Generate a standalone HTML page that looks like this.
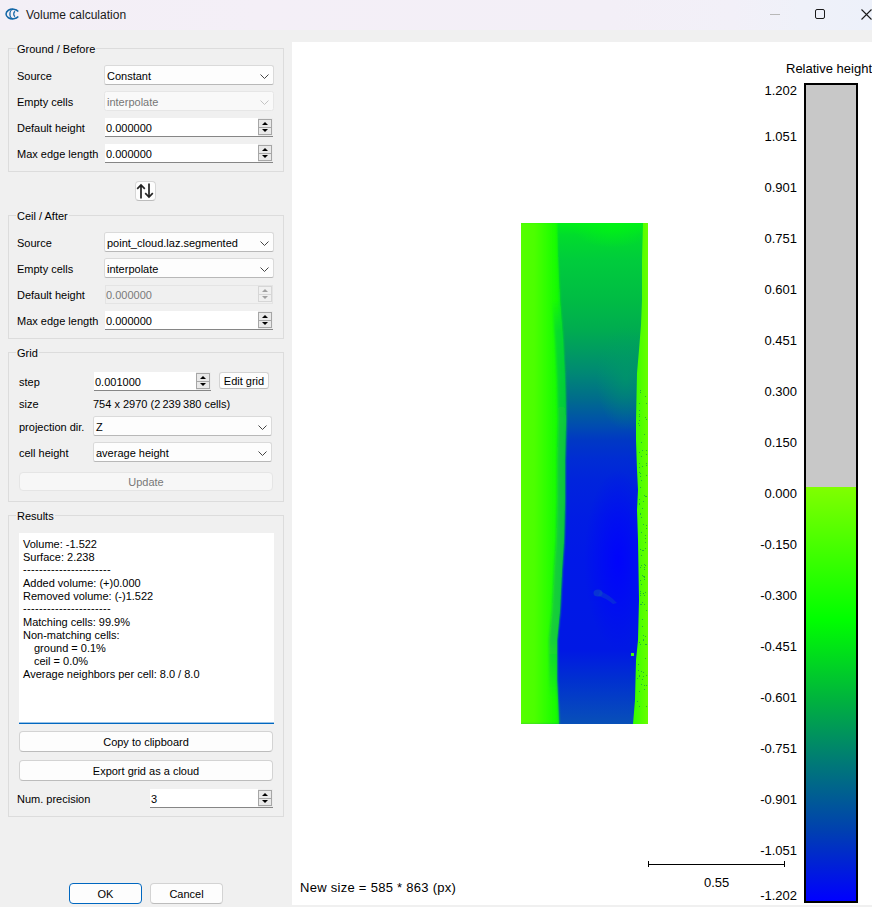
<!DOCTYPE html>
<html><head><meta charset="utf-8"><style>
*{margin:0;padding:0;box-sizing:border-box}
html,body{width:872px;height:907px;overflow:hidden;background:#f0f0f0;font-family:"Liberation Sans",sans-serif;color:#000}
.a{position:absolute}
.t{position:absolute;font-size:11px;line-height:13px;white-space:nowrap}
.gb{position:absolute;left:8px;width:276px;border:1px solid #dcdcdc}
.gt{position:absolute;left:16px;font-size:11px;line-height:13px;background:#f0f0f0;padding:0 1px;white-space:nowrap}
.cb{position:absolute;left:104px;width:170px;height:20px;background:#fdfdfd;border:1px solid #dadada;border-bottom-color:#b8b8b8;border-radius:2.5px}
.cb.dis{background:#f9f9f9;border-color:#e6e6e6;color:#767676}
.cb span{position:absolute;left:2px;top:4px;font-size:11px;line-height:13px;white-space:nowrap}
.cb svg{position:absolute;right:4px;top:8px}
.sb{position:absolute;height:19px;background:#ececec}
.sb .fld{position:absolute;left:0;top:0;height:18px;background:#fff}
.sb .ul{position:absolute;left:0;right:0;bottom:0;height:1px;background:#868686}
.sb .btn{position:absolute;width:14px;height:16px;top:1px}
.sb span{position:absolute;left:1px;top:4px;font-size:11px;line-height:13px;white-space:nowrap}
.sb.dis{background:#f0f0f0;outline:1px solid #e4e4e4;outline-offset:-1px}
.sb.dis .fld{background:transparent}
.sb.dis .ul{background:transparent}
.sb.dis span{color:#7a7a7a}
.pb{position:absolute;background:#fdfdfd;border:1px solid #d3d3d3;border-bottom-color:#bcbcbc;border-radius:4px;text-align:center;font-size:11px;line-height:19px;white-space:nowrap}
.vp{position:absolute;font-size:13px;line-height:15px;white-space:nowrap;color:#000}
.vp2{letter-spacing:0.28px}
</style></head><body>
<div class="a" style="left:0;top:0;width:872px;height:30px;background:linear-gradient(90deg,#f3eff6 0%,#f4eff7 30%,#f3eff7 70%,#f2f0f8 84%,#eff1f9 92%,#edf1fa 100%)"></div>
<div class="a" style="left:26px;top:6px;font-size:12px;line-height:18px;color:#1a1a1a;white-space:nowrap">Volume calculation</div>
<svg class="a" style="left:0;top:0" width="24" height="26" viewBox="0 0 24 26"><path d="M18.3 11.5 A6.6 4.9 0 1 0 18.3 16.5" fill="none" stroke="#1266a6" stroke-width="1.5"/><path d="M13 9.4 A3.1 4.6 0 0 0 13 18.6" fill="none" stroke="#1266a6" stroke-width="1.3"/><path d="M15 11.4 A2.3 2.9 0 0 0 15 16.6" fill="none" stroke="#1266a6" stroke-width="1.3"/></svg>
<div class="a" style="left:770px;top:14px;width:10px;height:1px;background:#b8b8b8"></div>
<div class="a" style="left:815px;top:9px;width:10px;height:10px;border:1px solid #1a1a1a;border-radius:2px"></div>
<svg class="a" style="left:861px;top:9px" width="11" height="11" viewBox="0 0 11 11"><path d="M0.5 0.5 L10.5 10.5 M10.5 0.5 L0.5 10.5" stroke="#1a1a1a" stroke-width="1.1"/></svg>
<div class="a" style="left:292px;top:42px;width:580px;height:863px;background:#fff"></div>
<svg class="a" style="left:0;top:0" width="872" height="907" viewBox="0 0 872 907"><defs><clipPath id="clp"><rect x="521" y="223" width="127" height="501"/></clipPath><linearGradient id="cg" gradientUnits="userSpaceOnUse" x1="0" y1="223" x2="0" y2="724"><stop offset="0.0000" stop-color="#00f018"/><stop offset="0.0240" stop-color="#00dc2c"/><stop offset="0.0739" stop-color="#00cc3c"/><stop offset="0.1537" stop-color="#00bc44"/><stop offset="0.2136" stop-color="#00ac50"/><stop offset="0.2535" stop-color="#009c60"/><stop offset="0.2994" stop-color="#008874"/><stop offset="0.3513" stop-color="#006c8c"/><stop offset="0.4052" stop-color="#004cb0"/><stop offset="0.4331" stop-color="#0038c4"/><stop offset="0.4731" stop-color="#002cd4"/><stop offset="0.5130" stop-color="#0024dc"/><stop offset="0.5928" stop-color="#001ce4"/><stop offset="0.6727" stop-color="#0018e8"/><stop offset="0.8523" stop-color="#0018e4"/><stop offset="0.9122" stop-color="#0030d0"/><stop offset="1.0000" stop-color="#0850b8"/></linearGradient><linearGradient id="lg" gradientUnits="userSpaceOnUse" x1="521" y1="0" x2="566" y2="0"><stop offset="0" stop-color="#54ff00"/><stop offset="0.3" stop-color="#4cff00"/><stop offset="0.55" stop-color="#30ff00"/><stop offset="0.78" stop-color="#16fc02"/><stop offset="1" stop-color="#00e41c"/></linearGradient><linearGradient id="rg" gradientUnits="userSpaceOnUse" x1="632" y1="0" x2="648" y2="0"><stop offset="0" stop-color="#30ff00"/><stop offset="1" stop-color="#68ff00"/></linearGradient><radialGradient id="gb"><stop offset="0" stop-color="#00f414" stop-opacity="0.8"/><stop offset="1" stop-color="#00f414" stop-opacity="0"/></radialGradient><radialGradient id="gb2"><stop offset="0" stop-color="#00a060" stop-opacity="0.5"/><stop offset="1" stop-color="#00a060" stop-opacity="0"/></radialGradient><radialGradient id="bb"><stop offset="0" stop-color="#0000ff" stop-opacity="0.85"/><stop offset="1" stop-color="#0000ff" stop-opacity="0"/></radialGradient><linearGradient id="stg" gradientUnits="userSpaceOnUse" x1="0" y1="300" x2="0" y2="700"><stop offset="0" stop-color="#00c848" stop-opacity="0"/><stop offset="0.08" stop-color="#00c848" stop-opacity="0.6"/><stop offset="0.35" stop-color="#10b058" stop-opacity="0.6"/><stop offset="0.85" stop-color="#10a868" stop-opacity="0.55"/><stop offset="1" stop-color="#10a868" stop-opacity="0"/></linearGradient><filter id="sb1" x="-20%" y="-20%" width="140%" height="140%"><feGaussianBlur stdDeviation="1.2"/></filter></defs><g clip-path="url(#clp)"><rect x="521" y="223" width="127" height="501" fill="url(#cg)"/><ellipse cx="618" cy="560" rx="34" ry="90" fill="url(#bb)"/><ellipse cx="612" cy="226" rx="40" ry="22" fill="url(#gb)"/><ellipse cx="626" cy="378" rx="30" ry="52" fill="url(#gb2)"/><ellipse cx="598" cy="593" rx="4.5" ry="3.5" fill="#1050c0" opacity="0.55"/><path d="M600 591 Q610 595 617 603 L613 604 Q606 598 598 596Z" fill="#1050c0" opacity="0.4"/><g filter="url(#sb1)"><polygon points="510,223 557,223 558,260 560,300 563,340 565,380 566,420 565,460 565,500 564,540 562,570 560,610 557,640 557,680 558,700 559,724 510,724" fill="url(#lg)"/></g><polygon points="521,223 557,223 558,260 560,300 563,340 565,380 566,420 565,460 565,500 564,540 562,570 560,610 557,640 557,680 558,700 559,724 521,724" fill="url(#lg)" opacity="0.6"/><g filter="url(#sb1)"><polygon points="560,300 563,340 565,380 566,420 565,460 565,500 564,540 562,570 560,610 557,640 557,680 558,700 550,700 549,680 549,640 552,610 554,570 556,540 557,500 557,460 558,420 557,380 555,340 552,300" fill="url(#stg)"/></g><polygon points="650,223 643,223 642,260 642,300 641,325 639,350 637,373 636,420 636,440 637,470 638,490 637,510 638,540 639,600 638,640 636,660 635,700 633,724 650,724" fill="url(#rg)"/><rect x="641" y="555" width="1" height="1" fill="#14a83c" opacity="0.8"/><rect x="645" y="592" width="1" height="1" fill="#14a83c" opacity="0.8"/><rect x="639" y="414" width="1" height="1" fill="#14a83c" opacity="0.8"/><rect x="638" y="664" width="1" height="1" fill="#14a83c" opacity="0.8"/><rect x="644" y="577" width="1" height="1" fill="#14a83c" opacity="0.8"/><rect x="646" y="419" width="1" height="1" fill="#14a83c" opacity="0.8"/><rect x="639" y="499" width="1" height="1" fill="#14a83c" opacity="0.8"/><rect x="644" y="434" width="1" height="1" fill="#14a83c" opacity="0.8"/><rect x="640" y="604" width="1" height="1" fill="#14a83c" opacity="0.8"/><rect x="640" y="513" width="1" height="1" fill="#14a83c" opacity="0.8"/><rect x="643" y="672" width="1" height="1" fill="#14a83c" opacity="0.8"/><rect x="639" y="420" width="1" height="1" fill="#14a83c" opacity="0.8"/><rect x="639" y="504" width="1" height="1" fill="#14a83c" opacity="0.8"/><rect x="646" y="685" width="1" height="1" fill="#14a83c" opacity="0.8"/><rect x="640" y="593" width="1" height="1" fill="#14a83c" opacity="0.8"/><rect x="639" y="503" width="1" height="1" fill="#14a83c" opacity="0.8"/><rect x="639" y="675" width="1" height="1" fill="#14a83c" opacity="0.8"/><rect x="645" y="538" width="1" height="1" fill="#14a83c" opacity="0.8"/><rect x="646" y="463" width="1" height="1" fill="#14a83c" opacity="0.8"/><rect x="642" y="450" width="1" height="1" fill="#14a83c" opacity="0.8"/><rect x="639" y="676" width="1" height="1" fill="#14a83c" opacity="0.8"/><rect x="641" y="442" width="1" height="1" fill="#14a83c" opacity="0.8"/><rect x="640" y="580" width="1" height="1" fill="#14a83c" opacity="0.8"/><rect x="638" y="670" width="1" height="1" fill="#14a83c" opacity="0.8"/><rect x="637" y="678" width="1" height="1" fill="#14a83c" opacity="0.8"/><rect x="639" y="706" width="1" height="1" fill="#14a83c" opacity="0.8"/><rect x="645" y="644" width="1" height="1" fill="#14a83c" opacity="0.8"/><rect x="643" y="550" width="1" height="1" fill="#14a83c" opacity="0.8"/><rect x="644" y="689" width="1" height="1" fill="#14a83c" opacity="0.8"/><rect x="642" y="575" width="1" height="1" fill="#14a83c" opacity="0.8"/><rect x="641" y="517" width="1" height="1" fill="#14a83c" opacity="0.8"/><rect x="640" y="514" width="1" height="1" fill="#14a83c" opacity="0.8"/><rect x="641" y="684" width="1" height="1" fill="#14a83c" opacity="0.8"/><rect x="645" y="658" width="1" height="1" fill="#14a83c" opacity="0.8"/><rect x="645" y="565" width="1" height="1" fill="#14a83c" opacity="0.8"/><rect x="642" y="619" width="1" height="1" fill="#14a83c" opacity="0.8"/><rect x="637" y="701" width="1" height="1" fill="#14a83c" opacity="0.8"/><rect x="646" y="450" width="1" height="1" fill="#14a83c" opacity="0.8"/><rect x="641" y="604" width="1" height="1" fill="#14a83c" opacity="0.8"/><rect x="641" y="565" width="1" height="1" fill="#14a83c" opacity="0.8"/><rect x="643" y="640" width="1" height="1" fill="#14a83c" opacity="0.8"/><rect x="639" y="410" width="1" height="1" fill="#14a83c" opacity="0.8"/><rect x="646" y="675" width="1" height="1" fill="#14a83c" opacity="0.8"/><rect x="642" y="550" width="1" height="1" fill="#14a83c" opacity="0.8"/><rect x="644" y="569" width="1" height="1" fill="#14a83c" opacity="0.8"/><rect x="646" y="644" width="1" height="1" fill="#14a83c" opacity="0.8"/><rect x="639" y="425" width="1" height="1" fill="#14a83c" opacity="0.8"/><rect x="646" y="528" width="1" height="1" fill="#14a83c" opacity="0.8"/><rect x="638" y="423" width="1" height="1" fill="#14a83c" opacity="0.8"/><rect x="645" y="548" width="1" height="1" fill="#14a83c" opacity="0.8"/><rect x="644" y="685" width="1" height="1" fill="#14a83c" opacity="0.8"/><rect x="645" y="535" width="1" height="1" fill="#14a83c" opacity="0.8"/><rect x="640" y="567" width="1" height="1" fill="#14a83c" opacity="0.8"/><rect x="642" y="626" width="1" height="1" fill="#14a83c" opacity="0.8"/><rect x="640" y="476" width="1" height="1" fill="#14a83c" opacity="0.8"/><rect x="639" y="642" width="1" height="1" fill="#14a83c" opacity="0.8"/><rect x="643" y="501" width="1" height="1" fill="#14a83c" opacity="0.8"/><rect x="641" y="456" width="1" height="1" fill="#14a83c" opacity="0.8"/><rect x="643" y="593" width="1" height="1" fill="#14a83c" opacity="0.8"/><rect x="640" y="644" width="1" height="1" fill="#14a83c" opacity="0.8"/><rect x="646" y="475" width="1" height="1" fill="#14a83c" opacity="0.8"/><rect x="644" y="595" width="1" height="1" fill="#14a83c" opacity="0.8"/><rect x="641" y="532" width="1" height="1" fill="#14a83c" opacity="0.8"/><rect x="646" y="610" width="1" height="1" fill="#14a83c" opacity="0.8"/><rect x="641" y="671" width="1" height="1" fill="#14a83c" opacity="0.8"/><rect x="642" y="602" width="1" height="1" fill="#14a83c" opacity="0.8"/><rect x="641" y="584" width="1" height="1" fill="#14a83c" opacity="0.8"/><rect x="639" y="467" width="1" height="1" fill="#14a83c" opacity="0.8"/><rect x="641" y="480" width="1" height="1" fill="#14a83c" opacity="0.8"/><rect x="642" y="508" width="1" height="1" fill="#14a83c" opacity="0.8"/><rect x="645" y="396" width="1" height="1" fill="#14a83c" opacity="0.8"/><rect x="639" y="691" width="1" height="1" fill="#14a83c" opacity="0.8"/><rect x="643" y="524" width="1" height="1" fill="#14a83c" opacity="0.8"/><rect x="640" y="392" width="1" height="1" fill="#14a83c" opacity="0.8"/><rect x="644" y="604" width="1" height="1" fill="#14a83c" opacity="0.8"/><rect x="644" y="579" width="1" height="1" fill="#14a83c" opacity="0.8"/><rect x="642" y="679" width="1" height="1" fill="#14a83c" opacity="0.8"/><rect x="646" y="454" width="1" height="1" fill="#14a83c" opacity="0.8"/><rect x="646" y="706" width="1" height="1" fill="#14a83c" opacity="0.8"/><rect x="645" y="417" width="1" height="1" fill="#14a83c" opacity="0.8"/><rect x="643" y="676" width="1" height="1" fill="#14a83c" opacity="0.8"/><rect x="643" y="593" width="1" height="1" fill="#14a83c" opacity="0.8"/><rect x="640" y="591" width="1" height="1" fill="#14a83c" opacity="0.8"/><rect x="645" y="636" width="1" height="1" fill="#14a83c" opacity="0.8"/><rect x="640" y="595" width="1" height="1" fill="#14a83c" opacity="0.8"/><rect x="640" y="487" width="1" height="1" fill="#14a83c" opacity="0.8"/><rect x="646" y="496" width="1" height="1" fill="#14a83c" opacity="0.8"/><rect x="640" y="473" width="1" height="1" fill="#14a83c" opacity="0.8"/><rect x="644" y="564" width="1" height="1" fill="#14a83c" opacity="0.8"/><rect x="639" y="416" width="1" height="1" fill="#14a83c" opacity="0.8"/><rect x="640" y="390" width="1" height="1" fill="#14a83c" opacity="0.8"/><rect x="638" y="664" width="1" height="1" fill="#14a83c" opacity="0.8"/><rect x="644" y="576" width="1" height="1" fill="#14a83c" opacity="0.8"/><rect x="639" y="403" width="1" height="1" fill="#14a83c" opacity="0.8"/><rect x="645" y="496" width="1" height="1" fill="#14a83c" opacity="0.8"/><rect x="642" y="466" width="1" height="1" fill="#14a83c" opacity="0.8"/><rect x="644" y="567" width="1" height="1" fill="#14a83c" opacity="0.8"/><rect x="643" y="576" width="1" height="1" fill="#14a83c" opacity="0.8"/><rect x="639" y="452" width="1" height="1" fill="#14a83c" opacity="0.8"/><rect x="643" y="639" width="1" height="1" fill="#14a83c" opacity="0.8"/><rect x="643" y="635" width="1" height="1" fill="#14a83c" opacity="0.8"/><rect x="640" y="549" width="1" height="1" fill="#14a83c" opacity="0.8"/><rect x="639" y="463" width="1" height="1" fill="#14a83c" opacity="0.8"/><rect x="645" y="565" width="1" height="1" fill="#14a83c" opacity="0.8"/><rect x="646" y="525" width="1" height="1" fill="#14a83c" opacity="0.8"/><rect x="639" y="472" width="1" height="1" fill="#14a83c" opacity="0.8"/><rect x="644" y="495" width="1" height="1" fill="#14a83c" opacity="0.8"/><rect x="646" y="465" width="1" height="1" fill="#14a83c" opacity="0.8"/><rect x="646" y="403" width="1" height="1" fill="#14a83c" opacity="0.8"/><rect x="645" y="542" width="1" height="1" fill="#14a83c" opacity="0.8"/><rect x="631" y="653" width="3" height="3" fill="#40ff00"/></g></svg>
<div class="gb" style="top:48px;height:124px"></div>
<div class="gt" style="top:43px">Ground / Before</div>
<div class="t" style="left:17px;top:70px">Source</div>
<div class="cb" style="left:104px;top:65px;width:170px"><span>Constant</span><svg width="9" height="5" viewBox="0 0 9 5"><path d="M0.5 0.5 L4.5 4.5 L8.5 0.5" fill="none" stroke="#444" stroke-width="1"/></svg></div>
<div class="t" style="left:17px;top:96px">Empty cells</div>
<div class="cb dis" style="left:104px;top:91px;width:170px"><span>interpolate</span><svg width="9" height="5" viewBox="0 0 9 5"><path d="M0.5 0.5 L4.5 4.5 L8.5 0.5" fill="none" stroke="#c4c4c4" stroke-width="1"/></svg></div>
<div class="t" style="left:17px;top:122px">Default height</div>
<div class="sb" style="left:105px;top:118px;width:168px"><div class="fld" style="width:153px"></div><span>0.000000</span><svg class="btn" style="left:153px" width="14" height="16" viewBox="0 0 14 16"><rect x="0.5" y="0.5" width="13" height="15" fill="#e9e9e9" stroke="#a6a6a6"/><line x1="0.5" y1="8.5" x2="13.5" y2="8.5" stroke="#a6a6a6"/><path d="M4 6 L7 3 L10 6Z" fill="#000"/><path d="M4 10 L7 13 L10 10Z" fill="#000"/></svg><div class="ul"></div></div>
<div class="t" style="left:17px;top:148px">Max edge length</div>
<div class="sb" style="left:105px;top:144px;width:168px"><div class="fld" style="width:153px"></div><span>0.000000</span><svg class="btn" style="left:153px" width="14" height="16" viewBox="0 0 14 16"><rect x="0.5" y="0.5" width="13" height="15" fill="#e9e9e9" stroke="#a6a6a6"/><line x1="0.5" y1="8.5" x2="13.5" y2="8.5" stroke="#a6a6a6"/><path d="M4 6 L7 3 L10 6Z" fill="#000"/><path d="M4 10 L7 13 L10 10Z" fill="#000"/></svg><div class="ul"></div></div>
<div class="a" style="left:135px;top:181px;width:21px;height:20px;background:#fdfdfd;border:1px solid #d6d6d6;border-bottom-color:#bcbcbc;border-radius:4px"></div>
<svg class="a" style="left:136px;top:182px" width="19" height="18" viewBox="0 0 19 18"><path d="M5 16.5 V3 M1.2 6.8 L5 3 L8.8 6.8" fill="none" stroke="#222" stroke-width="1.7"/><path d="M13 1.5 V15 M9.2 11.2 L13 15 L16.8 11.2" fill="none" stroke="#222" stroke-width="1.7"/></svg>
<div class="gb" style="top:215px;height:124px"></div>
<div class="gt" style="top:210px">Ceil / After</div>
<div class="t" style="left:17px;top:237px">Source</div>
<div class="cb" style="left:104px;top:232px;width:170px"><span>point_cloud.laz.segmented</span><svg width="9" height="5" viewBox="0 0 9 5"><path d="M0.5 0.5 L4.5 4.5 L8.5 0.5" fill="none" stroke="#444" stroke-width="1"/></svg></div>
<div class="t" style="left:17px;top:263px">Empty cells</div>
<div class="cb" style="left:104px;top:258px;width:170px"><span>interpolate</span><svg width="9" height="5" viewBox="0 0 9 5"><path d="M0.5 0.5 L4.5 4.5 L8.5 0.5" fill="none" stroke="#444" stroke-width="1"/></svg></div>
<div class="t" style="left:17px;top:289px">Default height</div>
<div class="sb dis" style="left:105px;top:285px;width:168px"><div class="fld" style="width:153px"></div><span>0.000000</span><svg class="btn" style="left:153px" width="14" height="16" viewBox="0 0 14 16"><rect x="0.5" y="0.5" width="13" height="15" fill="#f0f0f0" stroke="#d6d6d6"/><line x1="0.5" y1="8.5" x2="13.5" y2="8.5" stroke="#d6d6d6"/><path d="M4 6 L7 3 L10 6Z" fill="#a0a0a0"/><path d="M4 10 L7 13 L10 10Z" fill="#a0a0a0"/></svg><div class="ul"></div></div>
<div class="t" style="left:17px;top:315px">Max edge length</div>
<div class="sb" style="left:105px;top:311px;width:168px"><div class="fld" style="width:153px"></div><span>0.000000</span><svg class="btn" style="left:153px" width="14" height="16" viewBox="0 0 14 16"><rect x="0.5" y="0.5" width="13" height="15" fill="#e9e9e9" stroke="#a6a6a6"/><line x1="0.5" y1="8.5" x2="13.5" y2="8.5" stroke="#a6a6a6"/><path d="M4 6 L7 3 L10 6Z" fill="#000"/><path d="M4 10 L7 13 L10 10Z" fill="#000"/></svg><div class="ul"></div></div>
<div class="gb" style="top:352px;height:150px"></div>
<div class="gt" style="top:347px">Grid</div>
<div class="t" style="left:19px;top:376px">step</div>
<div class="sb" style="left:94px;top:372px;width:117px"><div class="fld" style="width:102px"></div><span>0.001000</span><svg class="btn" style="left:102px" width="14" height="16" viewBox="0 0 14 16"><rect x="0.5" y="0.5" width="13" height="15" fill="#e9e9e9" stroke="#a6a6a6"/><line x1="0.5" y1="8.5" x2="13.5" y2="8.5" stroke="#a6a6a6"/><path d="M4 6 L7 3 L10 6Z" fill="#000"/><path d="M4 10 L7 13 L10 10Z" fill="#000"/></svg><div class="ul"></div></div>
<div class="pb" style="left:219px;top:372px;width:50px;height:17px;color:#000;line-height:15px;padding-top:1px;border-radius:3px">Edit grid</div>
<div class="t" style="left:19px;top:398px">size</div>
<div class="t" style="left:93px;top:398px">754 x 2970 (2&#8239;239&#8239;380 cells)</div>
<div class="t" style="left:19px;top:421px">projection dir.</div>
<div class="cb" style="left:93px;top:416px;width:179px"><span>Z</span><svg width="9" height="5" viewBox="0 0 9 5"><path d="M0.5 0.5 L4.5 4.5 L8.5 0.5" fill="none" stroke="#444" stroke-width="1"/></svg></div>
<div class="t" style="left:19px;top:447px">cell height</div>
<div class="cb" style="left:93px;top:442px;width:179px"><span>average height</span><svg width="9" height="5" viewBox="0 0 9 5"><path d="M0.5 0.5 L4.5 4.5 L8.5 0.5" fill="none" stroke="#444" stroke-width="1"/></svg></div>
<div class="pb" style="left:19px;top:472px;width:254px;height:19px;color:#787878;background:#f7f7f7;border-color:#e5e5e5">Update</div>
<div class="gb" style="top:515px;height:302px"></div>
<div class="gt" style="top:510px">Results</div>
<div class="a" style="left:19px;top:533px;width:255px;height:191px;background:#fff;border-bottom:1px solid #0067c0"></div>
<div class="a" style="left:19px;top:722px;width:255px;height:1px;background:rgba(0,103,192,0.4)"></div>
<div class="t" style="left:23px;top:538px">Volume: -1.522</div>
<div class="t" style="left:23px;top:551px">Surface: 2.238</div>
<div class="t" style="left:23px;top:563px;letter-spacing:0.34px">----------------------</div>
<div class="t" style="left:23px;top:577px">Added volume: (+)0.000</div>
<div class="t" style="left:23px;top:590px">Removed volume: (-)1.522</div>
<div class="t" style="left:23px;top:602px;letter-spacing:0.34px">----------------------</div>
<div class="t" style="left:23px;top:616px">Matching cells: 99.9%</div>
<div class="t" style="left:23px;top:629px">Non-matching cells:</div>
<div class="t" style="left:34px;top:642px">ground = 0.1%</div>
<div class="t" style="left:34px;top:655px">ceil = 0.0%</div>
<div class="t" style="left:23px;top:668px">Average neighbors per cell: 8.0 / 8.0</div>
<div class="pb" style="left:19px;top:731px;width:254px;height:21px;color:#000;padding-top:1px">Copy to clipboard</div>
<div class="pb" style="left:19px;top:760px;width:254px;height:21px;color:#000;padding-top:1px">Export grid as a cloud</div>
<div class="t" style="left:17px;top:793px">Num. precision</div>
<div class="sb" style="left:150px;top:789px;width:123px"><div class="fld" style="width:108px"></div><span>3</span><svg class="btn" style="left:108px" width="14" height="16" viewBox="0 0 14 16"><rect x="0.5" y="0.5" width="13" height="15" fill="#e9e9e9" stroke="#a6a6a6"/><line x1="0.5" y1="8.5" x2="13.5" y2="8.5" stroke="#a6a6a6"/><path d="M4 6 L7 3 L10 6Z" fill="#000"/><path d="M4 10 L7 13 L10 10Z" fill="#000"/></svg><div class="ul"></div></div>
<div class="pb" style="left:69px;top:883px;width:73px;height:21px;color:#000;border:1px solid #0067c0;line-height:20px">OK</div>
<div class="pb" style="left:150px;top:883px;width:73px;height:21px;color:#000;line-height:20px">Cancel</div>
<div class="vp" style="left:786px;top:61px">Relative height</div>
<div class="vp" style="left:700px;width:97px;text-align:right;top:83px">1.202</div>
<div class="vp" style="left:700px;width:97px;text-align:right;top:129px">1.051</div>
<div class="vp" style="left:700px;width:97px;text-align:right;top:180px">0.901</div>
<div class="vp" style="left:700px;width:97px;text-align:right;top:231px">0.751</div>
<div class="vp" style="left:700px;width:97px;text-align:right;top:282px">0.601</div>
<div class="vp" style="left:700px;width:97px;text-align:right;top:333px">0.451</div>
<div class="vp" style="left:700px;width:97px;text-align:right;top:384px">0.300</div>
<div class="vp" style="left:700px;width:97px;text-align:right;top:435px">0.150</div>
<div class="vp" style="left:700px;width:97px;text-align:right;top:486px">0.000</div>
<div class="vp" style="left:700px;width:97px;text-align:right;top:537px">-0.150</div>
<div class="vp" style="left:700px;width:97px;text-align:right;top:588px">-0.300</div>
<div class="vp" style="left:700px;width:97px;text-align:right;top:639px">-0.451</div>
<div class="vp" style="left:700px;width:97px;text-align:right;top:690px">-0.601</div>
<div class="vp" style="left:700px;width:97px;text-align:right;top:741px">-0.751</div>
<div class="vp" style="left:700px;width:97px;text-align:right;top:792px">-0.901</div>
<div class="vp" style="left:700px;width:97px;text-align:right;top:843px">-1.051</div>
<div class="vp" style="left:700px;width:97px;text-align:right;top:888px">-1.202</div>
<div class="a" style="left:804px;top:83px;width:54px;height:820px;border:2px solid #000;background:#c8c8c8"></div>
<div class="a" style="left:806px;top:487px;width:50px;height:414px;background:linear-gradient(180deg,#80ff00 0%,#00ff00 32%,#00b040 52%,#007878 67%,#0040b0 83%,#0000ff 100%)"></div>
<svg class="a" style="left:646px;top:858px" width="142" height="12"><path d="M2.5 3 V9 M2.5 6.5 H138.5 M138.5 3 V9" stroke="#000" stroke-width="1" fill="none"/></svg>
<div class="vp" style="left:704px;top:875px">0.55</div>
<div class="vp vp2" style="left:300px;top:880px">New size = 585 * 863 (px)</div>
</body></html>
